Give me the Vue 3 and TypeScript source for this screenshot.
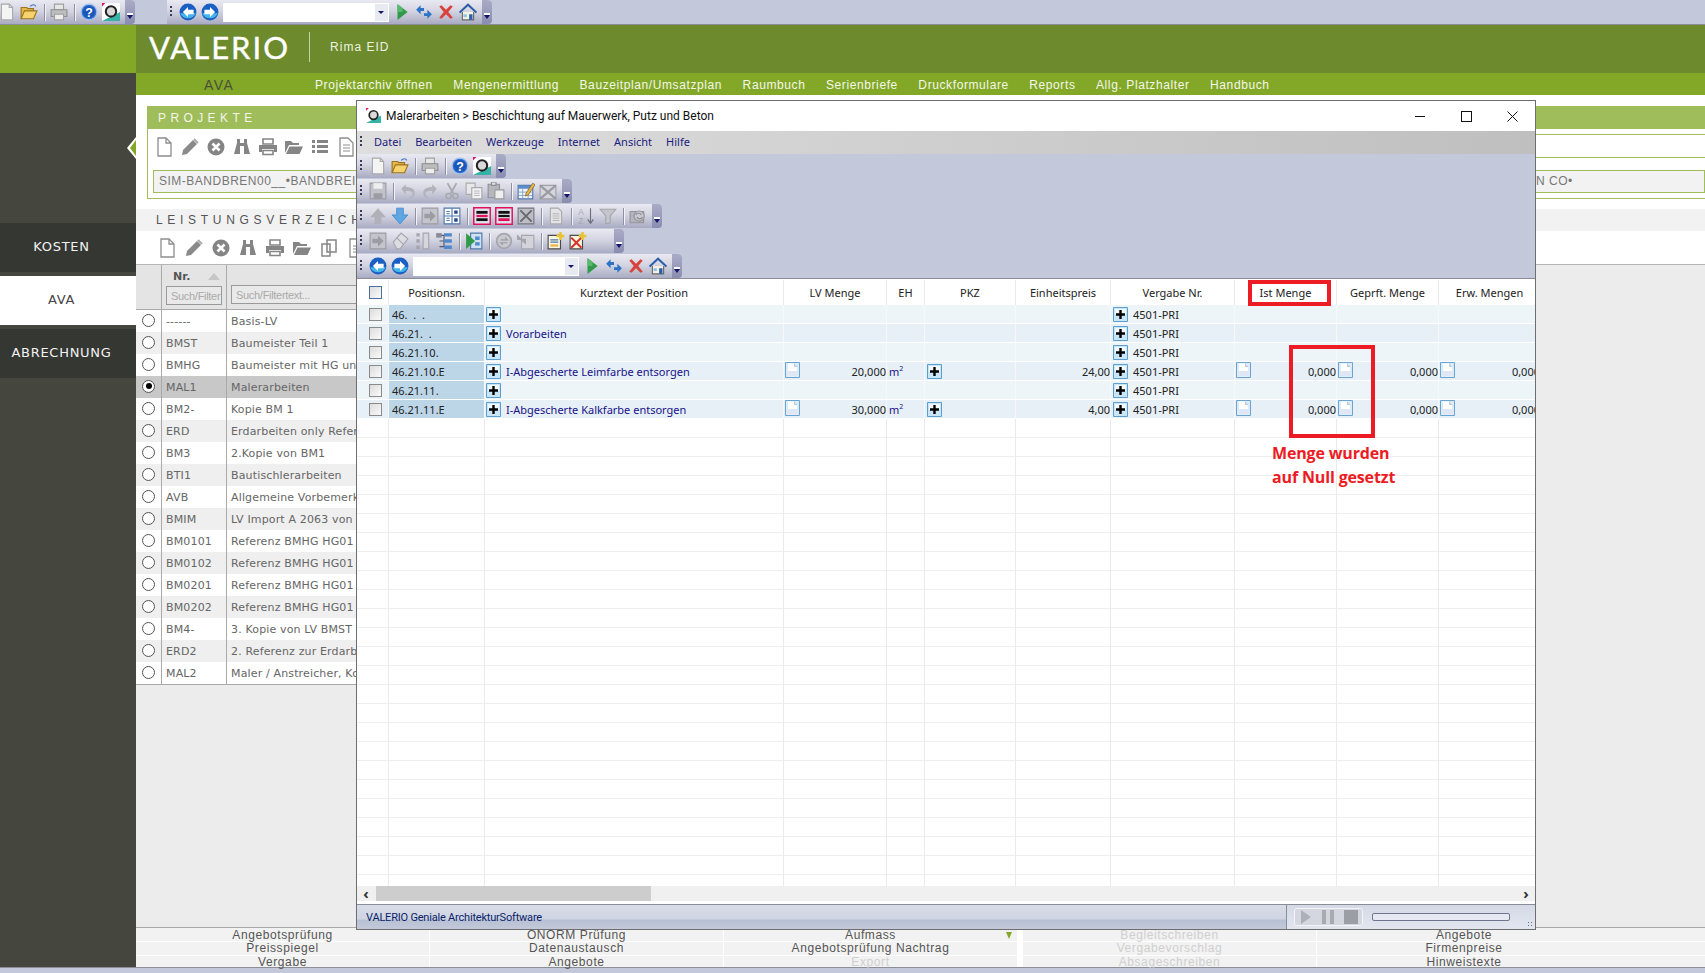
<script setup lang="ts">
type Row = { pos: string; text: string; stripe: boolean; full: boolean; lv?: string; ep?: string };

const bars: { width: number; items: string[] }[] = [
  { width: 149, items: ['new', 'open', '|', 'print', '|', 'help', 'logo'] },
  { width: 215, items: ['save', '|', 'undo', 'redo', 'cut', 'copy', 'paste', '|', 'tedit', 'tdel'] },
  { width: 305, items: ['up', 'down', '|', 'imp', 'nums', '|', 'pink1', 'pink2', 'xbox', '|', 'sheet', '|', 'az', 'filter', '|', 'gear'] },
  { width: 267, items: ['imp', 'erase', 'cols', 'tree', '|', 'run', '|', 'sync2', 'exp', '|', 'addn', 'addx'] },
];
const navBar = ['back', 'fwd', 'combo', 'play', 'swap', 'stop', 'home'];

const navLinks = ['Projektarchiv öffnen', 'Mengenermittlung', 'Bauzeitplan/Umsatzplan', 'Raumbuch', 'Serienbriefe', 'Druckformulare', 'Reports', 'Allg. Platzhalter', 'Handbuch'];
const projectTools = ['p-doc', 'p-pen', 'p-x', 'p-bino', 'p-print', 'p-folder', 'p-list', 'p-lines'];
const lvTools = ['p-doc', 'p-pen', 'p-x', 'p-bino', 'p-print', 'p-folder', 'p-copy', 'p-lines'];

const lvList = [
  ['------', 'Basis-LV'], ['BMST', 'Baumeister Teil 1'], ['BMHG', 'Baumeister mit HG und'], ['MAL1', 'Malerarbeiten'],
  ['BM2-', 'Kopie BM 1'], ['ERD', 'Erdarbeiten only Referenz'], ['BM3', '2.Kopie von BM1'], ['BTI1', 'Bautischlerarbeiten'],
  ['AVB', 'Allgemeine Vorbemerkungen'], ['BMIM', 'LV Import A 2063 von'], ['BM0101', 'Referenz BMHG HG01 01'], ['BM0102', 'Referenz BMHG HG01 02'],
  ['BM0201', 'Referenz BMHG HG01 03'], ['BM0202', 'Referenz BMHG HG01 04'], ['BM4-', '3. Kopie von LV BMST'], ['ERD2', '2. Referenz zur Erdarbeit'],
  ['MAL2', 'Maler / Anstreicher, Kosten'],
];

const headers = ['Positionsn.', 'Kurztext der Position', 'LV Menge', 'EH', 'PKZ', 'Einheitspreis', 'Vergabe Nr.', 'Ist Menge', 'Geprft. Menge', 'Erw. Mengen'];
const rows: Row[] = [
  { pos: '46.  .  .', text: '', stripe: false, full: false },
  { pos: '46.21.  .', text: 'Vorarbeiten', stripe: true, full: false },
  { pos: '46.21.10.', text: '', stripe: false, full: false },
  { pos: '46.21.10.E', text: 'I-Abgescherte Leimfarbe entsorgen', stripe: true, full: true, lv: '20,000', ep: '24,00' },
  { pos: '46.21.11.', text: '', stripe: false, full: false },
  { pos: '46.21.11.E', text: 'I-Abgescherte Kalkfarbe entsorgen', stripe: true, full: true, lv: '30,000', ep: '4,00' },
];
const blankRows = 25;

const foot = [
  [['Angebotsprüfung', 0], ['ÖNORM Prüfung', 0], ['Aufmass', 0], ['Begleitschreiben', 1], ['Angebote', 0]],
  [['Preisspiegel', 0], ['Datenaustausch', 0], ['Angebotsprüfung Nachtrag', 0], ['Vergabevorschlag', 1], ['Firmenpreise', 0]],
  [['Vergabe', 0], ['Angebote', 0], ['Export', 1], ['Absageschreiben', 1], ['Hinweistexte', 0]],
];
</script>

<template>
  <div class="app">
    <!-- icon sprite -->
    <svg class="sprite" xmlns="http://www.w3.org/2000/svg">
      <symbol id="new" viewBox="0 0 16 16"><path d="M3 1h7l3 3v11H3z" fill="#f4f4f4" stroke="#a9a9a9"/><path d="M10 1v3h3" fill="none" stroke="#a9a9a9"/></symbol>
      <symbol id="open" viewBox="0 0 16 16"><path d="M1 14V4h5l1 1h5v2" fill="#e8b648" stroke="#9a7420"/><path d="M1 14l3-7h11l-3 7z" fill="#f6d36f" stroke="#9a7420"/><path d="M9 3c2-2 4-2 5 0" fill="none" stroke="#3d74c0"/></symbol>
      <symbol id="print" viewBox="0 0 16 16"><path d="M4 1h8v5H4z" fill="#e6e6e6" stroke="#a0a0a0"/><path d="M1 6h14v6H1z" fill="#bdbdbd" stroke="#8f8f8f"/><path d="M4 10h8v5H4z" fill="#eee" stroke="#a0a0a0"/></symbol>
      <symbol id="help" viewBox="0 0 16 16"><circle cx="8" cy="8" r="7" fill="#2d6fd2" stroke="#a9c4ee"/><circle cx="8" cy="8" r="5.400" fill="#1c57b8"/><text x="8" y="12" font-size="11" font-weight="700" font-family="Liberation Sans" text-anchor="middle" fill="#fff">?</text></symbol>
      <symbol id="logo" viewBox="0 0 16 16"><path d="M0 0h16v16H0z" fill="#fff"/><path d="M0 16L16 8v8z" fill="#36b3a6"/><path d="M0 0h3L0 3z" fill="#e0105a"/><circle cx="8" cy="7.500" r="4.600" fill="#d9d9d9" stroke="#222" stroke-width="1.800"/></symbol>
      <symbol id="back" viewBox="0 0 16 16"><circle cx="8" cy="8" r="7.500" fill="#1c5fc4"/><path d="M1 9a7.500 7 0 0 0 14 0z" fill="#45b4e8"/><path d="M8 3.500L3.500 8 8 12.500V10h5V6H8z" fill="#fff"/></symbol>
      <symbol id="fwd" viewBox="0 0 16 16"><circle cx="8" cy="8" r="7.500" fill="#1c5fc4"/><path d="M1 9a7.500 7 0 0 0 14 0z" fill="#45b4e8"/><path d="M8 3.500L12.500 8 8 12.500V10H3V6h5z" fill="#fff"/></symbol>
      <symbol id="play" viewBox="0 0 16 16"><path d="M4 1l9 7-9 7z" fill="#2f9a4a"/><path d="M4 1l4.500 3.500V8H4z" fill="#57b86e"/></symbol>
      <symbol id="swap" viewBox="0 0 16 16"><path d="M1 6l4-4v2.500h3V7H5v3z" fill="#2d74c8"/><path d="M15 10l-4 4v-2.500H8V9h3V6z" fill="#2d74c8"/></symbol>
      <symbol id="stop" viewBox="0 0 16 16"><path d="M2 3l2-1 4 4 4-4 2 1-4 5 4 5-2 1-4-4-4 4-2-1 4-5z" fill="#d8423c"/></symbol>
      <symbol id="home" viewBox="0 0 16 16"><path d="M3 8v7h10V8" fill="#f3f1e4" stroke="#6a6a6a"/><path d="M.5 8.500L8 1.500l7.500 7" fill="none" stroke="#2c5fa8" stroke-width="1.800"/><path d="M9 10h3v5H9z" fill="#2c5fa8"/><path d="M4 10h3v2.500H4z" fill="#8fc0e6"/></symbol>
      <symbol id="save" viewBox="0 0 16 16"><path d="M1 1h14v14H1z" fill="#c2c2ca" stroke="#9c9ca4"/><path d="M4 1h8v5H4z" fill="#eee"/><path d="M4 10h8v5H4z" fill="#9c9ca4"/></symbol>
      <symbol id="undo" viewBox="0 0 16 16"><path d="M2 6l4-4v2.500c5 0 8 2 8 5 0 3-2 5-5 5 2-1 3-2.500 3-4 0-2-2-2.500-6-2.500V11z" fill="#b2b3ba"/></symbol>
      <symbol id="redo" viewBox="0 0 16 16"><path d="M14 6l-4-4v2.500c-5 0-8 2-8 5 0 3 2 5 5 5-2-1-3-2.500-3-4 0-2 2-2.500 6-2.500V11z" fill="#b2b3ba"/></symbol>
      <symbol id="cut" viewBox="0 0 16 16"><path d="M4 1l5 9M12 1L7 10" stroke="#a8a9b0" stroke-width="1.600" fill="none"/><circle cx="5" cy="12.500" r="2.300" fill="none" stroke="#a8a9b0" stroke-width="1.500"/><circle cx="11" cy="12.500" r="2.300" fill="none" stroke="#a8a9b0" stroke-width="1.500"/></symbol>
      <symbol id="copy" viewBox="0 0 16 16"><path d="M1 1h8v10H1z" fill="#e8e8ec" stroke="#aaa"/><path d="M6 5h9v10H6z" fill="#f1f1f4" stroke="#aaa"/><path d="M8 8h5M8 10h5M8 12h5" stroke="#bbb"/></symbol>
      <symbol id="paste" viewBox="0 0 16 16"><path d="M1 2h10v12H1z" fill="#b6b6bd" stroke="#8f8f96"/><path d="M4 0h4v3H4z" fill="#ddd" stroke="#8f8f96"/><path d="M7 7h8v8H7z" fill="#eee" stroke="#999"/></symbol>
      <symbol id="tedit" viewBox="0 0 16 16"><path d="M1 3h13v12H1z" fill="#eef3fa" stroke="#4e78ac"/><path d="M1 3h13v3H1z" fill="#5d8cc8"/><path d="M1 9h13M1 12h13M5 6v9M10 6v9" stroke="#7d9cc4" stroke-width=".7"/><path d="M8 10l6-9 2 1.500-6 9-2.500 1z" fill="#e8b648" stroke="#7a5c18" stroke-width=".6"/></symbol>
      <symbol id="tdel" viewBox="0 0 16 16"><path d="M1 3h14v12H1z" fill="#d5d6dc" stroke="#a0a0a8"/><path d="M1 3l14 12M15 3L1 15" stroke="#9a9aa2" stroke-width="1.800"/></symbol>
      <symbol id="up" viewBox="0 0 16 16"><path d="M8 1l7 8h-4v6H5V9H1z" fill="#b0b1b8"/></symbol>
      <symbol id="down" viewBox="0 0 16 16"><path d="M8 15l7-8h-4V1H5v6H1z" fill="#5ea6e4" stroke="#3a7cc0" stroke-width=".6"/></symbol>
      <symbol id="imp" viewBox="0 0 16 16"><path d="M1 1h14v14H1z" fill="#c4c5cc" stroke="#9b9ba3"/><path d="M3 6h5V3l5 5-5 5v-3H3z" fill="#9c9ca4"/></symbol>
      <symbol id="nums" viewBox="0 0 16 16"><path d="M1 1h14v14H1z" fill="#fff" stroke="#4e78ac"/><path d="M8 1v14M1 8h14" stroke="#4e78ac"/><path d="M3 4h3M3 6h3M3 10h3M3 12h3" stroke="#4e78ac"/><path d="M10 3h3v3h-3zM10 10h3v3h-3z" fill="#22488a"/></symbol>
      <symbol id="pink1" viewBox="0 0 16 16"><path d="M.7 .7h14.600v14.600H.7z" fill="#dfe3ee" stroke="#e0105a" stroke-width="1.300"/><path d="M3 3.500h10v2.500H3z" fill="#111"/><path d="M3 7h10v2H3z" fill="#e0105a"/><path d="M3 10h10v2.500H3z" fill="#111"/></symbol>
      <symbol id="pink2" viewBox="0 0 16 16"><path d="M.7 .7h14.600v14.600H.7z" fill="#dfe3ee" stroke="#e0105a" stroke-width="1.300"/><path d="M3 3.500h10v2.500H3z" fill="#111"/><path d="M3 7h10v2H3z" fill="#111"/><path d="M3 10h10v2.500H3z" fill="#e0105a"/></symbol>
      <symbol id="xbox" viewBox="0 0 16 16"><path d="M1 1h14v14H1z" fill="#bcbdc5" stroke="#77777f"/><path d="M3 3l10 10M13 3L3 13" stroke="#66666e" stroke-width="1.600"/></symbol>
      <symbol id="sheet" viewBox="0 0 16 16"><path d="M3 1h7l3 3v11H3z" fill="#e4e4e8" stroke="#aaa"/><path d="M5 6h6M5 8h6M5 10h6M5 12h6" stroke="#b5b5b5"/></symbol>
      <symbol id="az" viewBox="0 0 16 16"><text x="1" y="7.500" font-size="7.500" font-family="Liberation Sans" fill="#a8a9b0">A</text><text x="1" y="15" font-size="7.500" font-family="Liberation Sans" fill="#a8a9b0">Z</text><path d="M12 1v13M9.500 11l2.500 3.500 2.500-3.500" stroke="#6e6e78" fill="none"/></symbol>
      <symbol id="filter" viewBox="0 0 16 16"><path d="M1 2h14L10 8v6l-4 1V8z" fill="#c4c5cc" stroke="#a5a5ad"/></symbol>
      <symbol id="gear" viewBox="0 0 16 16"><path d="M1 4h12v10H1z" fill="#b4b5bc" stroke="#93939b"/><circle cx="9" cy="8" r="4.500" fill="#c9cad0" stroke="#93939b"/><path d="M6 7c1-2 4-2 5 0M12 9c-1 2-4 2-5 0" stroke="#8a8a92" fill="none"/></symbol>
      <symbol id="erase" viewBox="0 0 16 16"><path d="M2 9l7-8 6 5-7 9H5z" fill="#dcdde3" stroke="#a6a6ae"/><path d="M5 5l6 6" stroke="#a6a6ae"/></symbol>
      <symbol id="cols" viewBox="0 0 16 16"><path d="M9 1h5v14H9z" fill="#d5d6dc" stroke="#a5a5ad"/><path d="M3 1h3v3H3zM3 6.500h3v3H3zM3 12h3v3H3z" fill="#a5a5ad"/></symbol>
      <symbol id="tree" viewBox="0 0 16 16"><path d="M4 3h4v10H4M4 8h4" fill="none" stroke="#56566a"/><path d="M8 1h7v3H8zM8 6.500h7v3H8zM8 12h7v3H8z" fill="#4e8acc"/><path d="M1 1h5v4H1z" fill="#8a8a98"/></symbol>
      <symbol id="run" viewBox="0 0 16 16"><path d="M5 1h10v14H5z" fill="#cfe0f0" stroke="#4e78ac"/><path d="M9 4h4v3H9zM9 9h4v3H9z" fill="#4e8acc"/><path d="M1 1l8 7-8 7z" fill="#2f9a4a"/></symbol>
      <symbol id="sync2" viewBox="0 0 16 16"><circle cx="8" cy="8" r="6.500" fill="#c9cad0" stroke="#a5a5ad" stroke-width="1.600"/><path d="M5 7h6l-2-2M11 9.500H5l2 2" stroke="#9a9aa2" fill="none"/></symbol>
      <symbol id="exp" viewBox="0 0 16 16"><path d="M4 3h11v12H4z" fill="#d3d4da" stroke="#a5a5ad"/><path d="M0 2l4 4h4v5L3 7H0z" fill="#a5a5ad"/></symbol>
      <symbol id="addn" viewBox="0 0 16 16"><path d="M1 3h11v12H1z" fill="#f8f5e0" stroke="#4a4a4a"/><path d="M3 7h7M3 9h7" stroke="#4e78ac"/><path d="M3 11h7v2H3z" fill="#e8b648"/><path d="M12 0v7M8.500 3.500h7" stroke="#e8c430" stroke-width="2.200"/></symbol>
      <symbol id="addx" viewBox="0 0 16 16"><path d="M1 3h11v12H1z" fill="#f8f5e0" stroke="#4a4a4a"/><path d="M2 5l9 9M11 5l-9 9" stroke="#d8302c" stroke-width="1.800"/><path d="M12 0v7M8.500 3.500h7" stroke="#e8c430" stroke-width="2.200"/></symbol>
      <symbol id="plus" viewBox="0 0 15 15"><path d="M.5 .5h14v14H.5z" fill="#c8e6f8" stroke="#5a9fd0"/><path d="M2 2h11v6H2z" fill="#fff" opacity=".75"/><path d="M7.500 3v9M3 7.500h9" stroke="#000" stroke-width="2.400"/></symbol>
      <symbol id="sdoc" viewBox="0 0 15 16"><path d="M.5 .5h14v15H.5z" fill="#dcebf6" stroke="#6aa4d2"/><path d="M3 1.500h6.500l2.500 3v10H3z" fill="#fff"/><path d="M9.500 1.500v3h2.500" fill="#c8d6ea" stroke="#9db4d4" stroke-width=".6"/><path d="M3 9h9v5.500H3z" fill="#dfe6f5"/></symbol>
      <symbol id="p-doc" viewBox="0 0 20 20"><path d="M4 1h8l5 5v13H4z" fill="#fff" stroke="#8d8d8d" stroke-width="1.300"/><path d="M12 1v5h5" fill="none" stroke="#8d8d8d" stroke-width="1.300"/></symbol>
      <symbol id="p-pen" viewBox="0 0 20 20"><path d="M3 13L13 3l4 4L7 17l-5 1z" fill="#8a8a8a"/><path d="M14 2l4 4" stroke="#aaa" stroke-width="2"/></symbol>
      <symbol id="p-x" viewBox="0 0 20 20"><circle cx="10" cy="10" r="8.500" fill="#858585"/><path d="M6.500 6.500l7 7M13.500 6.500l-7 7" stroke="#fff" stroke-width="2.600"/></symbol>
      <symbol id="p-bino" viewBox="0 0 20 20"><path d="M5 2h3v4h4V2h3v4l3 11h-6V9H8v8H2L5 6z" fill="#858585"/></symbol>
      <symbol id="p-print" viewBox="0 0 20 20"><path d="M5 2h10v5H5z" fill="none" stroke="#858585" stroke-width="1.600"/><path d="M1 8h18v7h-3v-3H4v3H1z" fill="#858585"/><path d="M5 13.500h10v4H5z" fill="none" stroke="#858585" stroke-width="1.600"/></symbol>
      <symbol id="p-folder" viewBox="0 0 20 20"><path d="M1 4h6l2 2h6v2H5l-4 8z" fill="#858585"/><path d="M5.500 9.500H19L15.500 17H2z" fill="#858585"/></symbol>
      <symbol id="p-list" viewBox="0 0 20 20"><path d="M2 3h3v3H2zM7 3h11v3H7zM2 8h3v3H2zM7 8h11v3H7zM2 13h3v3H2zM7 13h11v3H7z" fill="#858585"/></symbol>
      <symbol id="p-lines" viewBox="0 0 20 20"><path d="M4 1h8l5 5v13H4z" fill="#fff" stroke="#8d8d8d" stroke-width="1.300"/><path d="M7 8h7M7 11h7M7 14h7" stroke="#8d8d8d" stroke-width="1.200"/></symbol>
      <symbol id="p-copy" viewBox="0 0 20 20"><path d="M3 6h8v12H3zM8 2h9v12H8z" fill="#fff" stroke="#858585" stroke-width="1.500"/></symbol>
    </svg>

    <!-- outer toolbars -->
    <div class="topbar">
      <div class="bar bar--clip" :style="{ width: bars[0].width + 'px' }">
        <span class="bar__grip"></span>
        <template v-for="(it, i) in bars[0].items" :key="i">
          <span v-if="it === '|'" class="bar__sep"></span>
          <svg v-else class="bar__ico"><use :href="'#' + it" /></svg>
        </template>
        <span class="bar__more"></span>
      </div>
      <div class="bar bar--nav">
        <span class="bar__grip"></span>
        <template v-for="it in navBar" :key="it">
          <span v-if="it === 'combo'" class="combo"><i class="combo__arrow"></i></span>
          <svg v-else class="bar__ico"><use :href="'#' + it" /></svg>
        </template>
        <span class="bar__more"></span>
      </div>
    </div>

    <div class="shell">
      <aside class="side">
        <div class="side__green"></div>
        <div class="side__tabs">
          <div class="side__tab">KOSTEN</div>
          <div class="side__tab side__tab--active">AVA</div>
          <div class="side__tab">ABRECHNUNG</div>
        </div>
        <span class="side__marker"></span>
      </aside>

      <main class="main">
        <header class="brand">
          <span class="brand__logo">VALERIO</span>
          <span class="brand__user">Rima EID</span>
        </header>
        <nav class="nav">
          <span class="nav__title">AVA</span>
          <a v-for="link in navLinks" :key="link" class="nav__link">{{ link }}</a>
        </nav>

        <section class="projects">
          <h2 class="projects__head">PROJEKTE</h2>
          <div class="tools">
            <svg v-for="t in projectTools" :key="t" class="tools__ico"><use :href="'#' + t" /></svg>
            <span class="tools__search"></span>
          </div>
          <div class="projects__pick">
            <div class="projects__value">
              <span class="projects__name">SIM-BANDBREN00__•BANDBREITE</span>
              <span>N CO•</span>
            </div>
          </div>
        </section>

        <h2 class="lvhead">LEISTUNGSVERZEICHNIS</h2>
        <div class="tools tools--lv">
          <svg v-for="t in lvTools" :key="t" class="tools__ico"><use :href="'#' + t" /></svg>
        </div>

        <section class="lv">
          <div class="lv__table">
            <div class="lv__row lv__row--head">
              <span class="lv__cell"></span>
              <span class="lv__cell lv__cell--filter">
                <b class="lv__nr">Nr.<i class="lv__sort"></i></b>
                <span class="lv__input">Such/Filter</span>
              </span>
              <span class="lv__cell lv__cell--filter lv__cell--end">
                <span class="lv__input lv__input--wide">Such/Filtertext...</span>
              </span>
            </div>
            <div v-for="(r, i) in lvList" :key="r[0]" class="lv__row" :class="{ 'lv__row--odd': i % 2 === 1, 'lv__row--sel': r[0] === 'MAL1' }">
              <span class="lv__cell lv__cell--radio"><i class="radio" :class="{ 'radio--on': r[0] === 'MAL1' }"></i></span>
              <span class="lv__cell lv__cell--text">{{ r[0] }}</span>
              <span class="lv__cell lv__cell--text">{{ r[1] }}</span>
            </div>
          </div>
        </section>

        <footer class="foot">
          <template v-for="(line, l) in foot" :key="l">
            <span v-for="(c, i) in line" :key="i" class="foot__cell" :class="{ 'foot__cell--off': c[1] === 1, 'foot__cell--gap': i === 3 }">
              {{ c[0] }}<i v-if="c[0] === 'Aufmass'" class="foot__mark"></i>
            </span>
          </template>
        </footer>
      </main>
    </div>
    <div class="strip"></div>

    <!-- child window -->
    <div class="win">
      <div class="win__title">
        <svg class="win__icon"><use href="#logo" /></svg>
        <span class="win__caption">Malerarbeiten &gt; Beschichtung auf Mauerwerk, Putz und Beton</span>
        <span class="win__ctrl"><i class="win__min"></i></span>
        <span class="win__ctrl"><i class="win__max"></i></span>
        <span class="win__ctrl"><svg width="11" height="11" viewBox="0 0 11 11"><path d="M.5 .5l10 10M10.500 .5l-10 10" stroke="#111" fill="none" /></svg></span>
      </div>
      <div class="win__menu">
        <span class="bar__grip"></span>
        <span class="win__item">Datei</span><span class="win__item">Bearbeiten</span><span class="win__item">Werkzeuge</span><span class="win__item">Internet</span><span class="win__item">Ansicht</span><span class="win__item">Hilfe</span>
      </div>
      <div class="win__bars">
        <div v-for="(b, n) in bars" :key="n" class="bar" :style="{ width: b.width + 'px' }">
          <span class="bar__grip"></span>
          <template v-for="(it, i) in b.items" :key="i">
            <span v-if="it === '|'" class="bar__sep"></span>
            <svg v-else class="bar__ico"><use :href="'#' + it" /></svg>
          </template>
          <span class="bar__more"></span>
        </div>
        <div class="bar bar--nav">
          <span class="bar__grip"></span>
          <template v-for="it in navBar" :key="it">
            <span v-if="it === 'combo'" class="combo"><i class="combo__arrow"></i></span>
            <svg v-else class="bar__ico"><use :href="'#' + it" /></svg>
          </template>
          <span class="bar__more"></span>
        </div>
      </div>

      <div class="grid">
        <div class="grid__row grid__row--head">
          <span class="grid__cell grid__cell--check"><i class="check check--head"></i></span>
          <span v-for="h in headers" :key="h" class="grid__cell grid__cell--center">{{ h }}</span>
        </div>
        <div v-for="r in rows" :key="r.pos" class="grid__row grid__row--data" :class="{ 'grid__row--stripe': r.stripe }">
          <span class="grid__cell grid__cell--check"><i class="check"></i></span>
          <span class="grid__cell grid__cell--pos">{{ r.pos }}</span>
          <span class="grid__cell grid__cell--link"><svg class="plus"><use href="#plus" /></svg><span class="grid__text">{{ r.text }}</span></span>
          <span class="grid__cell"><template v-if="r.full"><svg class="sdoc"><use href="#sdoc" /></svg><span class="grid__num">{{ r.lv }}</span></template></span>
          <span class="grid__cell"><span v-if="r.full" class="grid__unit">m<sup>2</sup></span></span>
          <span class="grid__cell"><svg v-if="r.full" class="plus"><use href="#plus" /></svg></span>
          <span class="grid__cell"><span v-if="r.full" class="grid__num">{{ r.ep }}</span></span>
          <span class="grid__cell"><svg class="plus"><use href="#plus" /></svg><span class="grid__vg">4501-PRI</span></span>
          <span v-for="c in 3" :key="c" class="grid__cell"><template v-if="r.full"><svg class="sdoc"><use href="#sdoc" /></svg><span class="grid__num">0,000</span></template></span>
        </div>
        <div v-for="n in blankRows" :key="'b' + n" class="grid__row grid__row--blank">
          <span v-for="c in 11" :key="c" class="grid__cell"></span>
        </div>
      </div>

      <div class="scroll">
        <span class="scroll__arrow">‹</span>
        <span class="scroll__track"><i class="scroll__thumb"></i></span>
        <span class="scroll__arrow">›</span>
      </div>

      <div class="status">
        <span class="status__text">VALERIO Geniale ArchitekturSoftware</span>
        <div class="status__player">
          <span class="player">
            <svg width="69" height="18" viewBox="0 0 69 18">
              <path d="M7 2l10 7-10 7z" fill="#aeb0b8" />
              <path d="M28 2h4v14h-4zM36 2h4v14h-4z" fill="#a8aab2" />
              <path d="M50 2h14v14H50z" fill="#9c9ea6" />
            </svg>
          </span>
          <span class="status__progress"></span>
          <span class="status__grip"></span>
        </div>
      </div>
    </div>

    <!-- red annotation marks drawn over the screenshot -->
    <span class="mark mark--head"></span>
    <span class="mark mark--cells"></span>
    <p class="mark__note">Menge wurden<br>auf Null gesetzt</p>
  </div>
</template>

<style>
html, body { margin: 0; padding: 0; background: #fff; overflow: hidden; }
</style>

<style scoped>
.app {
  position: relative;
  display: flex;
  flex-direction: column;
  width: 1705px;
  height: 973px;
  overflow: hidden;
  font-family: "Liberation Sans", sans-serif;
  color: #333;
}
.sprite { display: none; }

/* toolbars */
.topbar {
  display: flex;
  gap: 32px;
  height: 25px;
  box-sizing: border-box;
  background: #c3c9da;
  border-bottom: 1px solid #8d8f98;
  flex: none;
}
.bar {
  display: flex;
  align-items: center;
  position: relative;
  height: 24px;
  flex: none;
  box-sizing: border-box;
  padding-right: 14px;
  background: linear-gradient(#e8e9f1, #d4d5e1 45%, #a9abc3);
  border-radius: 0 4px 4px 0;
}
.bar--clip { margin-left: -14px; }
.bar--nav { width: 325px; }
.bar__grip {
  flex: none;
  width: 2px;
  height: 12px;
  margin: 0 5px 0 3px;
  background: repeating-linear-gradient(#3a3a5a 0 2px, transparent 2px 4px);
}
.bar__ico { flex: none; width: 18px; height: 18px; margin: 0 2px; }
.bar__sep { flex: none; width: 1px; height: 17px; margin: 0 3px 0 4px; background: #8f90a5; box-shadow: 1px 0 #f4f4f8; }
.bar__more {
  position: absolute;
  right: 0;
  top: 0;
  width: 10px;
  height: 24px;
  background: linear-gradient(#a9abc6, #8b8db0);
  border-radius: 0 4px 4px 0;
}
.bar__more::after {
  content: "";
  position: absolute;
  left: 2px;
  top: 15px;
  width: 0;
  border-top: 4px solid #14146a;
  border-left: 3px solid transparent;
  border-right: 3px solid transparent;
  box-shadow: 0 -2px 0 #fff;
}
.combo {
  flex: none;
  position: relative;
  width: 166px;
  height: 19px;
  margin: 0 2px;
  background: #fff;
}
.combo__arrow {
  position: absolute;
  right: 1px;
  top: 1px;
  width: 13px;
  height: 17px;
  background: #e8eaf2;
}
.combo__arrow::after {
  content: "";
  position: absolute;
  left: 3px;
  top: 7px;
  border-top: 3px solid #14146a;
  border-left: 3px solid transparent;
  border-right: 3px solid transparent;
}

/* shell */
.shell { flex: 1; display: flex; min-height: 0; }
.side {
  flex: none;
  position: relative;
  width: 136px;
  display: flex;
  flex-direction: column;
  background: #45473f;
}
.side__green { height: 48px; background: #83a827; }
.side__tabs { display: flex; flex-direction: column; gap: 4px; padding-top: 150px; }
.side__tab {
  height: 49px;
  line-height: 48px;
  padding-right: 13px;
  text-align: center;
  font-size: 13px;
  letter-spacing: .7px;
  color: #f2f2f2;
  background: #353732;
  font-family: "DejaVu Sans", sans-serif;
}
.side__tab--active { background: #fff; color: #444; }
.side__marker {
  position: absolute;
  right: 0;
  top: 112px;
  width: 9px;
  height: 22px;
  background: #fff;
  clip-path: polygon(100% 0, 0 50%, 100% 100%);
}
.side__marker::after {
  content: "";
  position: absolute;
  left: 3px;
  right: 0;
  top: 3px;
  bottom: 3px;
  background: #83a827;
  clip-path: polygon(100% 0, 0 50%, 100% 100%);
}

.main { flex: 1; min-width: 0; display: flex; flex-direction: column; background: #fff; }
.brand {
  flex: none;
  display: flex;
  align-items: center;
  height: 48px;
  padding-left: 13px;
  background: #6d8b2d;
  color: #fff;
}
.brand__logo {
  font-family: Lato, sans-serif;
  font-size: 31px;
  letter-spacing: 2px;
  line-height: 1;
  padding-right: 19px;
  margin-top: -3px;
  -webkit-text-stroke: .4px #fff;
}
.brand__user {
  height: 30px;
  line-height: 30px;
  padding-left: 20px;
  margin-top: -5px;
  border-left: 1px solid #c6d4a4;
  font-size: 12px;
  letter-spacing: 1px;
  color: #eef2e2;
}
.nav {
  flex: none;
  display: flex;
  align-items: center;
  height: 22px;
  padding-top: 1px;
  box-sizing: border-box;
  background: #83a827;
  font-size: 12px;
  letter-spacing: .6px;
  color: #f4f7ea;
}
.nav__title {
  width: 179px;
  padding-left: 68px;
  box-sizing: border-box;
  font-size: 14px;
  letter-spacing: 1.500px;
  color: #4a4f3a;
}
.nav__link { margin-right: 20.500px; white-space: nowrap; }

.projects { flex: none; margin: 11px 0 0 11px; border-left: 1px solid #9fbd5a; }
.projects__head {
  margin: 0;
  height: 23px;
  line-height: 24px;
  padding-left: 10px;
  font-size: 12px;
  font-weight: 400;
  letter-spacing: 4.400px;
  color: #f3f6e8;
  background: #9fbd5a;
}
.tools {
  display: flex;
  align-items: center;
  gap: 6px;
  height: 36px;
  padding-left: 6px;
  box-sizing: border-box;
}
.tools__ico { flex: none; width: 20px; height: 20px; }
.tools__search {
  flex: 1;
  height: 22px;
  margin-left: 40px;
  margin-top: -2px;
  border-top: 1px solid #9fbd5a;
  border-bottom: 1px solid #9fbd5a;
}
.projects__pick {
  height: 34px;
  padding: 5px 0 0 5px;
  box-sizing: border-box;
  border-bottom: 1px solid #9fbd5a;
  background: #fff;
}
.projects__value {
  display: flex;
  height: 23px;
  box-sizing: border-box;
  padding-left: 5px;
  border: 1px solid #9fbd5a;
  background: #f2f2f2;
  font-size: 12px;
  line-height: 21px;
  letter-spacing: .5px;
  color: #777;
  white-space: nowrap;
  overflow: hidden;
}
.projects__name { flex: none; width: 1377px; }
.lvhead {
  flex: none;
  margin: 10px 0 0;
  height: 22px;
  line-height: 22px;
  padding-left: 20px;
  background: #f2f2f2;
  font-size: 12px;
  font-weight: 400;
  letter-spacing: 4.700px;
  color: #555;
}
.tools--lv { flex: none; height: 33px; gap: 7px; padding-left: 21px; }

.lv {
  flex: 1;
  min-height: 0;
  background: #ececec;
  border-top: 1px solid #b5b5b5;
  border-bottom: 1px solid #a8a8a8;
}
.lv__table {
  width: 800px;
  font-family: "DejaVu Sans", sans-serif;
  font-size: 11px;
  letter-spacing: .15px;
  color: #666;
  border-bottom: 1px solid #aaa;
}
.lv__row {
  display: grid;
  grid-template-columns: 26px 65px 1fr;
  height: 22px;
  background: #fff;
}
.lv__row--head { height: 44px; background: #e4e4e4; border-bottom: 1px solid #aaa; }
.lv__row--odd { background: #efefef; }
.lv__row--sel { background: #c8c8c8; }
.lv__cell {
  border-right: 1px solid #aaa;
  box-sizing: border-box;
  min-width: 0;
  white-space: nowrap;
  overflow: hidden;
}
.lv__cell--text { padding-left: 4px; line-height: 23px; }
.lv__cell--radio { display: flex; align-items: center; justify-content: center; margin-top: -2px; }
.lv__cell--filter { padding: 4px 4px 0; position: relative; }
.lv__cell--end { padding-top: 20px; }
.lv__nr { display: block; height: 16px; font-size: 11px; padding-left: 7px; padding-top: 1px; color: #555; }
.lv__sort {
  display: inline-block;
  margin-left: 17px;
  border-bottom: 7px solid #c6c6c6;
  border-left: 6px solid transparent;
  border-right: 6px solid transparent;
}
.lv__input {
  display: block;
  height: 19px;
  line-height: 18px;
  box-sizing: border-box;
  width: 56px;
  padding-left: 4px;
  border: 1px solid #9a9a9a;
  background: #e9e9e9;
  font-family: "Liberation Sans", sans-serif;
  letter-spacing: -.3px;
  color: #aaa;
  overflow: hidden;
}
.lv__input--wide { width: 300px; }
.radio {
  width: 11px;
  height: 11px;
  border: 1px solid #555;
  border-radius: 50%;
  background: #fff;
  display: block;
  box-sizing: content-box;
  position: relative;
}
.radio--on::after {
  content: "";
  position: absolute;
  left: 2.500px;
  top: 2.500px;
  width: 6px;
  height: 6px;
  border-radius: 50%;
  background: #000;
}

.foot {
  flex: none;
  display: grid;
  grid-template-columns: 294px 294px 294px 299px 294px;
  grid-template-rows: 13px 14px 12px;
  height: 39px;
  background:
    linear-gradient(#fff, #fff) 0 13px / 100% 1px no-repeat,
    linear-gradient(#fff, #fff) 0 27px / 100% 1px no-repeat,
    #f2f2f2;
  font-size: 12px;
  letter-spacing: .6px;
  color: #555;
}
.foot__cell {
  position: relative;
  text-align: center;
  line-height: 14px;
  white-space: nowrap;
  box-sizing: border-box;
  border-right: 1px solid #fff;
}
.foot__cell:nth-child(5n) { border-right: 0; }
.foot__cell--off { color: #cfcfcf; }
.foot__cell--gap { border-left: 5px solid #fff; }
.foot__mark {
  position: absolute;
  left: 282px;
  top: 4px;
  border-top: 7px solid #83a827;
  border-left: 3px solid transparent;
  border-right: 3px solid transparent;
}
.strip {
  flex: none;
  height: 6px;
  background: #c3c9da;
  border-top: 1px solid #8d8f98;
  box-sizing: border-box;
}

/* child window */
.win {
  position: absolute;
  left: 356px;
  top: 100px;
  width: 1180px;
  height: 830px;
  box-sizing: border-box;
  display: flex;
  flex-direction: column;
  border: 1px solid #6e6e6e;
  background: #fff;
  font-family: "Noto Sans", sans-serif;
}
.win__title {
  flex: none;
  display: flex;
  align-items: center;
  height: 30px;
  padding-left: 9px;
  background: #fff;
}
.win__icon { width: 15px; height: 15px; margin-top: -2px; }
.win__caption {
  flex: 1;
  margin-left: 5px;
  margin-top: -1px;
  font-family: Roboto, sans-serif;
  font-size: 12px;
  color: #111;
}
.win__ctrl {
  display: flex;
  align-items: center;
  justify-content: center;
  width: 46px;
  height: 30px;
}
.win__min { width: 10px; height: 1px; background: #111; }
.win__max { width: 9px; height: 9px; border: 1px solid #111; }
.win__menu {
  flex: none;
  display: flex;
  align-items: center;
  height: 23px;
  padding-bottom: 2px;
  box-sizing: border-box;
  background: linear-gradient(90deg, #dedede, #bfbfbf);
  font-size: 11px;
  color: #1c1c80;
}
.win__item { margin-right: 14px; }
.win__menu .bar__grip { margin-right: 12px; }
.win__bars {
  flex: none;
  display: flex;
  flex-direction: column;
  gap: 1px;
  height: 125px;
  box-sizing: border-box;
  background: #c3c9da;
  border-bottom: 1px solid #8a8c96;
}

.grid {
  flex: 1;
  min-height: 0;
  overflow: hidden;
  font-size: 11px;
  color: #222;
}
.grid__row {
  display: grid;
  grid-template-columns: 32px 96px 299px 103px 38px 91px 95px 124px 102px 102px 102px;
  height: 19px;
}
.grid__row--head { height: 26px; padding-top: 1px; box-sizing: border-box; }
.grid__row--data { background: #eef5f9; border-bottom: 1px solid #fff; box-sizing: border-box; }
.grid__row--stripe { background: #e6f0f6; }
.grid__row--blank .grid__cell { border-bottom: 1px solid #eee; }
.grid__cell {
  display: flex;
  align-items: center;
  min-width: 0;
  box-sizing: border-box;
  white-space: nowrap;
  border-right: 1px solid #eaeaea;
}
.grid__row--data .grid__cell { border-right-color: #f6f9fb; }
.grid__cell--check { justify-content: center; padding-left: 5px; }
.grid__cell--center { justify-content: center; }
.grid__cell--pos { background: #bcd6e8; padding-left: 3px; white-space: pre; }
.grid__cell--link .plus { margin-left: 1px; }
.grid__text { margin-left: 5px; color: #20108a; }
.grid__num { margin-left: auto; }
.grid__vg { margin-left: 5px; }
.grid__unit { margin-left: 2px; color: #20108a; }
.grid__unit sup { font-size: 7px; line-height: 0; }
.plus { flex: none; width: 15px; height: 15px; margin-left: 2px; }
.sdoc { flex: none; width: 15px; height: 16px; margin-left: 1px; margin-top: -3px; }
.check {
  display: block;
  width: 13px;
  height: 13px;
  box-sizing: border-box;
  border: 1px solid #8a8a8a;
  background: linear-gradient(135deg, #dcdcdc, #fafafa);
}
.check--head { border-color: #4a6f9f; }

.scroll {
  flex: none;
  display: flex;
  align-items: center;
  height: 15px;
  margin-bottom: 3px;
  background: #f0f0f0;
}
.scroll__arrow { flex: none; width: 18px; text-align: center; font-size: 15px; line-height: 13px; font-weight: 700; color: #333; }
.scroll__track { flex: 1; height: 15px; }
.scroll__thumb { display: block; width: 275px; height: 15px; margin-left: 1px; background: #cdcdcd; }

.status {
  flex: none;
  display: flex;
  align-items: center;
  height: 25px;
  border-top: 1px solid #8a8c96;
  box-sizing: border-box;
  background: linear-gradient(#d8dce8, #cfd4e2 60%, #b7bfd3 61%, #c3c9da);
  font-family: Roboto, sans-serif;
  font-size: 11px;
  letter-spacing: -.2px;
  color: #0a246a;
}
.status__text { flex: 1; padding-left: 9px; }
.status__player {
  display: flex;
  align-items: center;
  width: 249px;
  height: 24px;
  box-sizing: border-box;
  padding-left: 7px;
  border-left: 1px solid #8a8c96;
  position: relative;
  background: linear-gradient(#d4d9e6, #e2e6ef);
}
.player {
  display: block;
  width: 69px;
  height: 18px;
  border: 1px solid #f4f4f6;
  border-radius: 3px;
  box-sizing: border-box;
  overflow: hidden;
  background: #d4d7e0;
}
.player svg { display: block; margin: -1px; }
.status__progress {
  width: 138px;
  height: 8px;
  margin-left: 9px;
  border: 1px solid #6e7690;
  border-radius: 2px;
  box-sizing: border-box;
  background: #e6e9f1;
}
.status__grip {
  position: absolute;
  right: 1px;
  bottom: 1px;
  width: 7px;
  height: 7px;
  background-image: radial-gradient(#6a6e80 1px, transparent 1px);
  background-size: 3px 3px;
}

/* annotation */
.mark { position: absolute; box-sizing: border-box; border: 4px solid #ed1c24; }
.mark--head { left: 1248px; top: 280px; width: 83px; height: 26px; }
.mark--cells { left: 1289px; top: 345px; width: 86px; height: 93px; }
.mark__note {
  position: absolute;
  left: 1272px;
  top: 441px;
  margin: 0;
  font-family: "Open Sans", sans-serif;
  font-size: 16px;
  font-weight: 700;
  line-height: 24px;
  letter-spacing: -.15px;
  color: #ed1c24;
  white-space: nowrap;
}
</style>
